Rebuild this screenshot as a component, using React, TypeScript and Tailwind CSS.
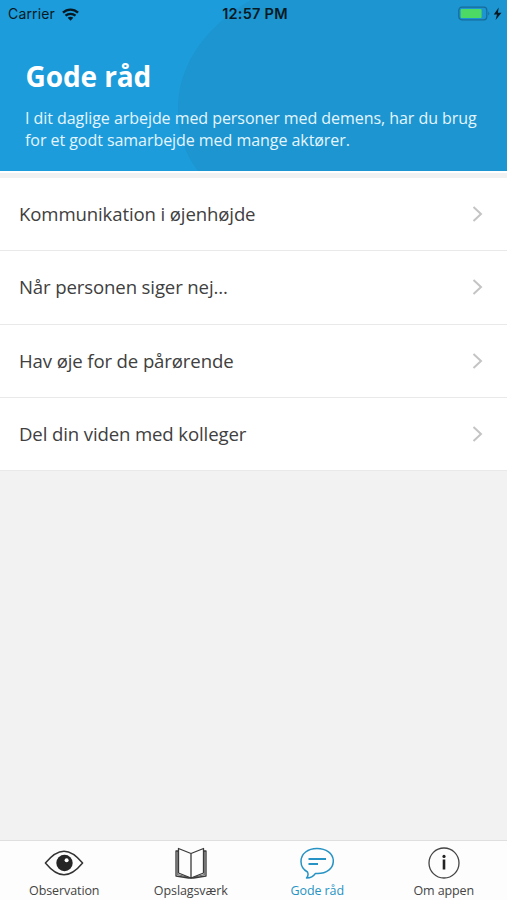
import React from "react";

const rows = [
  "Kommunikation i øjenhøjde",
  "Når personen siger nej...",
  "Hav øje for de pårørende",
  "Del din viden med kolleger",
];

function Eye() {
  return (
    <svg width="40" height="34" viewBox="0 0 40 34" fill="none">
      <path d="M1.400 17C8 9 14 5.200 20 5.200S32 9 38.600 17C32 25 26 28.800 20 28.800S8 25 1.400 17Z" stroke="#333" strokeWidth="1.500" strokeLinejoin="round" />
      <circle cx="20.500" cy="17" r="8.200" fill="#252525" />
      <circle cx="22.600" cy="14.200" r="2" fill="#fff" />
    </svg>
  );
}

function Book() {
  return (
    <svg width="34" height="34" viewBox="0 0 34 34" fill="none" stroke="#3a3a3a" strokeWidth="1.300" strokeLinejoin="round">
      <path d="M4.500 2.500 17 7.500 29.500 2.500V27L17 32 4.500 27ZM17 7.500V32" />
      <path d="M4.500 5H2V30L14.500 32H19.500L32 30V5H29.500" />
      <path d="M3.300 5V28.500L15 31.500M30.700 5V28.500L19 31.500" strokeWidth=".8" />
    </svg>
  );
}

function Speech() {
  return (
    <svg width="34" height="34" viewBox="0 0 34 34" fill="none" stroke="#2793c4">
      <path d="M7.500 26C3.300 23.700 1 20 1 15.500C1 7.500 8 2.500 17 2.500S33.300 7.500 33.300 15S26.500 27.500 17.500 27.500L15.500 27.400C13.500 30.500 10.500 32 6.500 32C8.200 30.300 8.500 28.400 7.500 26Z" strokeWidth="1.500" strokeLinejoin="round" />
      <path d="M8.500 13H26M8.500 18H18" strokeWidth="2.200" />
    </svg>
  );
}

function Info() {
  return (
    <svg width="34" height="34" viewBox="0 0 34 34" fill="none">
      <circle cx="17" cy="17" r="15" stroke="#444" strokeWidth="1.300" />
      <path d="M17 13.500V23.500" stroke="#222" strokeWidth="2.600" />
      <circle cx="17" cy="10.400" r="1.600" fill="#222" />
    </svg>
  );
}

const tabs = [
  { label: "Observation", icon: <Eye /> },
  { label: "Opslagsværk", icon: <Book /> },
  { label: "Gode råd", icon: <Speech />, active: true },
  { label: "Om appen", icon: <Info /> },
];

export default function App() {
  return (
    <div className="flex h-[900px] w-[507px] flex-col overflow-hidden whitespace-nowrap bg-[#f2f2f2] font-['Open_Sans',sans-serif] text-[#404040]">
      <header className="relative h-[171px] shrink-0 bg-[#1c9cdb] text-white">
        <svg className="absolute inset-0" width="507" height="171">
          <path d="M251 0C206 26 178 65 178 108C178 132 184 153 198 171H507V0Z" fill="#1c95d0" />
        </svg>
        <div className="relative grid h-7 grid-cols-[1fr_auto_1fr] items-center pl-2 pr-[5px] font-['Inter',sans-serif] text-sm text-[#071923]">
          <div className="flex items-center gap-[7px]">
            <span className="tracking-[0.15px]">Carrier</span>
            <svg width="17" height="13" viewBox="0 0 18 13" fill="none" stroke="currentColor" strokeWidth="2.500">
              <path d="M1 4.600C5.600.3 12.400.3 17 4.600M3.700 7.800C6.700 5.100 11.300 5.100 14.300 7.800" />
              <path d="M6 10C7.700 8.500 10.300 8.500 12 10L9 13Z" fill="currentColor" stroke="none" />
            </svg>
          </div>
          <span className="text-[14.500px] font-semibold tracking-[0.25px]">12:57 PM</span>
          <svg className="justify-self-end" width="44" height="16" viewBox="0 0 44 16">
            <rect x=".8" y="1.200" width="28" height="12.600" rx="3" fill="none" stroke="#176b97" strokeWidth="1.200" />
            <rect x="2.600" y="3" width="21" height="9" rx="1" fill="#4cda64" />
            <path d="M30.300 5.500Q32.400 7.500 30.300 9.500Z" fill="#176b97" />
            <path d="M40.700 1.500 35.800 8.500H39L37.600 14 43.500 6.700H39.900Z" fill="#071923" />
          </svg>
        </div>
        <h1 className="relative ml-[25.500px] mt-[31px] text-[28px] font-bold leading-[34px] tracking-[-0.1px]">Gode råd</h1>
        <p className="relative ml-[25px] mt-[14px] text-base leading-[22px] tracking-[-0.05px] text-[#e4f5fd]">
          I dit daglige arbejde med personer med demens, har du brug
          <br />
          for et godt samarbejde med mange aktører.
        </p>
      </header>
      <main className="flex-1">
        <div className="h-[7px] border-t-2 border-white bg-[#f1f1f1]" />
        {rows.map((row) => (
          <div key={row} className="flex h-[73.250px] items-center justify-between border-b border-[#e9e9e9] bg-white pl-[19px] pr-6">
            <span className="text-[18.600px] leading-7 tracking-[-0.13px]">{row}</span>
            <svg width="11" height="18" viewBox="0 0 11 18" fill="none" stroke="#c4c4c4" strokeWidth="2">
              <path d="M1.500 2 9 9 1.500 16" />
            </svg>
          </div>
        ))}
      </main>
      <nav className="grid h-[60px] shrink-0 grid-cols-4 border-t border-[#dfdfdf] bg-[#fdfdfd] pl-px">
        {tabs.map((tab) => (
          <div key={tab.label} className={`flex flex-col items-center pt-[5px] ${tab.active ? "text-[#2793c4]" : "text-[#444]"}`}>
            {tab.icon}
            <span className="mt-0.5 text-[12.500px] leading-[18px] tracking-[-0.1px]">{tab.label}</span>
          </div>
        ))}
      </nav>
    </div>
  );
}
